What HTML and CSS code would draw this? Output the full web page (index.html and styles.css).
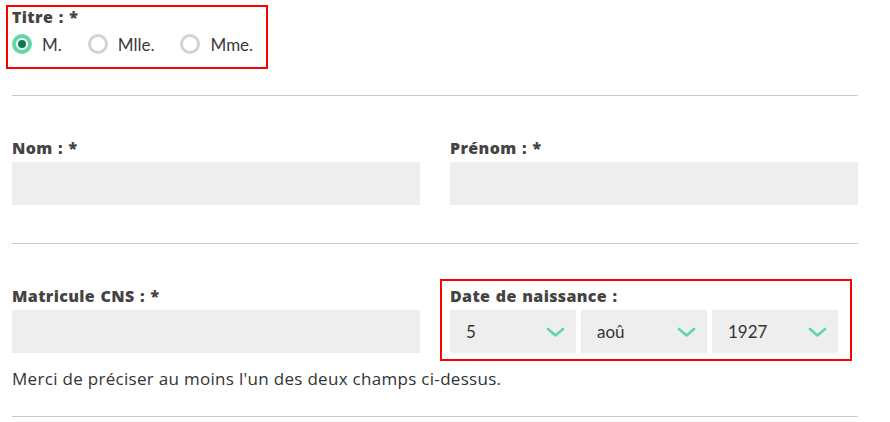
FILE: index.html
```html
<!DOCTYPE html>
<html lang="fr">
<head>
<meta charset="utf-8">
<title>Formulaire</title>
<link rel="stylesheet" href="styles.css">
</head>
<body>
<div class="form">
  <div class="titre hl-titre">
    <div class="label">Titre : *</div>
    <div class="radios">
      <label class="radio"><span class="circle checked"></span>M.</label>
      <label class="radio"><span class="circle"></span>Mlle.</label>
      <label class="radio"><span class="circle"></span>Mme.</label>
    </div>
  </div>
  <div class="sep"></div>
  <div class="row">
    <div class="field">
      <div class="label">Nom : *</div>
      <div class="input"></div>
    </div>
    <div class="field">
      <div class="label">Prénom : *</div>
      <div class="input"></div>
    </div>
  </div>
  <div class="sep"></div>
  <div class="row">
    <div class="field">
      <div class="label">Matricule CNS : *</div>
      <div class="input"></div>
    </div>
    <div class="field hl-date">
      <div class="label">Date de naissance :</div>
      <div class="selects">
        <div class="select"><span>5</span><svg class="chev" width="19" height="10" viewBox="0 0 19 10"><polyline points="2,2 9.5,8.5 17,2"/></svg></div>
        <div class="select"><span>aoû</span><svg class="chev" width="19" height="10" viewBox="0 0 19 10"><polyline points="2,2 9.5,8.5 17,2"/></svg></div>
        <div class="select"><span>1927</span><svg class="chev" width="19" height="10" viewBox="0 0 19 10"><polyline points="2,2 9.5,8.5 17,2"/></svg></div>
      </div>
    </div>
  </div>
  <p class="note">Merci de préciser au moins l'un des deux champs ci-dessus.</p>
  <div class="sep last"></div>
</div>
</body>
</html>
```
FILE: styles.css
```css
html, body {
  margin: 0;
  padding: 0;
  background: #ffffff;
}

body {
  font-family: Lato, "Open Sans", sans-serif;
  color: #333333;
}

.form {
  width: 846px;
  margin-left: 12px;
  padding-top: 7px;
}

.label {
  font-family: "Open Sans", Lato, sans-serif;
  font-size: 16px;
  line-height: 20px;
  font-weight: 800;
  letter-spacing: 0.35px;
  word-spacing: 1px;
  color: #444444;
}

.titre {
  position: relative;
  width: 250px;
}

.hl-titre::after {
  content: "";
  position: absolute;
  top: -2px;
  left: -6px;
  right: -6px;
  bottom: -13px;
  border: 2px solid #ff0000;
  pointer-events: none;
}

.radios {
  display: flex;
  align-items: center;
  gap: 26px;
  margin-top: 5px;
  height: 24px;
}

.radio {
  display: flex;
  align-items: center;
  gap: 10px;
  font-size: 17px;
  color: #3a3a3a;
}

.circle {
  box-sizing: border-box;
  width: 20px;
  height: 20px;
  border-radius: 50%;
  border: 3px solid #d3d3d3;
  background: #ffffff;
  display: flex;
  align-items: center;
  justify-content: center;
}

.circle.checked {
  border: 4px solid #63d8a6;
}

.circle.checked::before {
  content: "";
  width: 8px;
  height: 8px;
  border-radius: 50%;
  background: #0d7a58;
}

.sep {
  height: 1px;
  background: #cccccc;
  margin-top: 39px;
}

.row {
  display: grid;
  grid-template-columns: 408px 408px;
  column-gap: 30px;
  margin-top: 42px;
}

.row + .sep {
  margin-top: 38px;
}

.field {
  position: relative;
}

.input {
  height: 43px;
  margin-top: 4px;
  background: #eeeeee;
}

.hl-date::after {
  content: "";
  position: absolute;
  top: -7px;
  left: -10px;
  right: 6px;
  bottom: -8px;
  border: 2px solid #ff0000;
  pointer-events: none;
}

.selects {
  display: grid;
  grid-template-columns: 126px 126px 126px;
  column-gap: 5px;
  margin-top: 4px;
}

.select {
  height: 43px;
  background: #eeeeee;
  display: flex;
  align-items: center;
  justify-content: space-between;
  padding: 0 11px 0 16px;
  font-size: 17px;
  color: #333333;
}

.chev polyline {
  fill: none;
  stroke: #5fd7a2;
  stroke-width: 2.6;
  stroke-linecap: round;
  stroke-linejoin: round;
}

.note {
  margin: 16px 0 0;
  font-family: "Open Sans", Lato, sans-serif;
  font-size: 17px;
  line-height: 20px;
  letter-spacing: 0.3px;
  color: #333333;
}

.sep.last {
  margin-top: 27px;
}
```
